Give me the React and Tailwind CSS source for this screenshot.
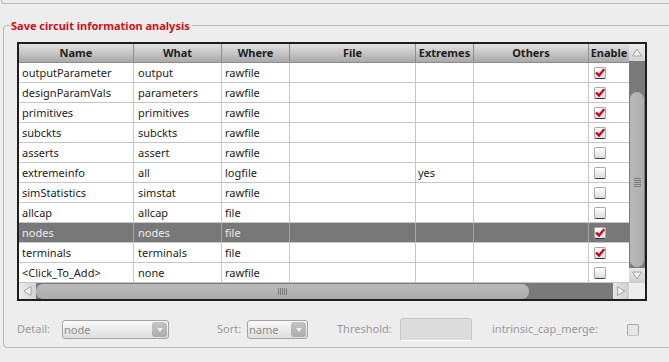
import React from 'react';

const rows = [
  { name: 'outputParameter', what: 'output', where: 'rawfile', ext: '', on: true },
  { name: 'designParamVals', what: 'parameters', where: 'rawfile', ext: '', on: true },
  { name: 'primitives', what: 'primitives', where: 'rawfile', ext: '', on: true },
  { name: 'subckts', what: 'subckts', where: 'rawfile', ext: '', on: true },
  { name: 'asserts', what: 'assert', where: 'rawfile', ext: '', on: false },
  { name: 'extremeinfo', what: 'all', where: 'logfile', ext: 'yes', on: false },
  { name: 'simStatistics', what: 'simstat', where: 'rawfile', ext: '', on: false },
  { name: 'allcap', what: 'allcap', where: 'file', ext: '', on: false },
  { name: 'nodes', what: 'nodes', where: 'file', ext: '', on: true, sel: true },
  { name: 'terminals', what: 'terminals', where: 'file', ext: '', on: true },
  { name: '<Click_To_Add>', what: 'none', where: 'rawfile', ext: '', on: false },
];

// column widths include the 1px right grid line
const cols = [
  { key: 'name', label: 'Name', w: 'w-[115px]', pad: 'pl-[3px]' },
  { key: 'what', label: 'What', w: 'w-[88px]', pad: 'pl-[4px]' },
  { key: 'where', label: 'Where', w: 'w-[68px]', pad: 'pl-[3px]' },
  { key: 'file', label: 'File', w: 'w-[126px]', pad: 'pl-[3px]' },
  { key: 'ext', label: 'Extremes', w: 'w-[58px]', pad: 'pl-[2px]' },
  { key: 'others', label: 'Others', w: 'w-[115px]', pad: 'pl-[3px]' },
];

const CheckBox = ({ checked, disabled }) => (
  <div
    className={`w-[12px] h-[12px] rounded-[2px] border border-[#a8a8a8] border-b-[#3c3c3c] flex items-center justify-center ${
      disabled ? 'bg-[#e6e6e6] border-b-[#c4c4c4]' : 'bg-gradient-to-b from-white to-[#dcdcdc]'
    }`}
  >
    {checked && (
      <svg width="10" height="9" viewBox="0 0 10 9">
        <path d="M1 4.5 L4 7.5 L9.2 1.2" fill="none" stroke="#d2001a" strokeWidth="2.4" strokeLinejoin="miter" />
      </svg>
    )}
  </div>
);

const Arrow = ({ dir }) => {
  const pts = {
    up: '1.5,9 6,2 10.5,9',
    down: '1.5,2 6,9 10.5,2',
    left: '9,1.5 2,6 9,10.5',
    right: '2.5,1.5 9.5,6 2.5,10.5',
  }[dir];
  return (
    <svg width="12" height="12" viewBox="0 0 12 12">
      <polygon points={pts} fill="#f2f2f2" stroke="#a4a4a4" strokeWidth="1" />
    </svg>
  );
};

const Combo = ({ value, w }) => (
  <div className={`${w} h-[19px] rounded-[3px] border border-[#a4a4a4] bg-gradient-to-b from-[#fafafa] to-[#dedede] flex items-center justify-between pl-[1px] pr-[1px]`}>
    <span className="text-[#8c8c8c] leading-none">{value}</span>
    <div className="w-[15px] h-[15px] rounded-[3px] bg-gradient-to-b from-[#c4c4c4] to-[#acacac] flex items-center justify-center">
      <svg width="6" height="4" viewBox="0 0 6 4">
        <polygon points="0,0 6,0 3,4" fill="#f0f0f0" />
      </svg>
    </div>
  </div>
);

export default function App() {
  return (
    <div className="w-[669px] h-[362px] overflow-hidden bg-[#ededed] font-['Noto_Sans','DejaVu_Sans',sans-serif] text-[11px] text-[#1c1c1c]">
      {/* end of the previous group box */}
      <div className="h-[4px] w-[700px] ml-[1px] border-l border-b border-[#bcbcbc] rounded-bl-[3px]" />

      <fieldset className="mt-[14px] ml-[3px] w-[700px] border border-[#b9b9b9] rounded-[4px] pb-[6px]">
        <legend className="ml-[7px] pr-[2px] leading-[15px] font-bold text-[#cc1020]">Save circuit information analysis</legend>

        <div className="mt-[9px] ml-[13px] w-[630px] border-2 border-[#1e1e1e] bg-white">
          <div className="flex">
            <div className="w-[610px]">
              {/* header */}
              <div className="flex h-[19px] bg-gradient-to-b from-[#e2e2e2] to-[#a9a9a9] border-b border-[#8c8c8c]">
                {cols.map((c) => (
                  <div key={c.key} className={`${c.w} border-r border-[#8e8e8e] flex items-center justify-center font-bold text-[#1e1e1e]`}>
                    {c.label}
                  </div>
                ))}
                <div className="w-[40px] flex items-center justify-center font-bold text-[#1e1e1e] overflow-hidden whitespace-nowrap">Enable</div>
              </div>
              {/* rows */}
              {rows.map((r, i) => (
                <div
                  key={i}
                  className={`flex h-[20px] border-b border-[#c6c6c6] ${r.sel ? 'bg-[#787878] text-[#ececec]' : 'bg-white'}`}
                >
                  {cols.map((c) => (
                    <div
                      key={c.key}
                      className={`${c.w} ${c.pad} border-r ${r.sel ? 'border-[#a6a6a6]' : 'border-[#c6c6c6]'} leading-[19px] whitespace-nowrap overflow-hidden`}
                    >
                      {c.key === 'others' || c.key === 'file' ? '' : r[c.key]}
                    </div>
                  ))}
                  <div className="w-[40px] pl-[5px] flex items-center">
                    <CheckBox checked={r.on} />
                  </div>
                </div>
              ))}
            </div>

            {/* vertical scrollbar */}
            <div className="w-[16px] h-[239px] bg-[#7a7a7a] flex flex-col">
              <div className="h-[17px] bg-gradient-to-b from-[#ececec] to-[#d2d2d2] flex items-center justify-center">
                <Arrow dir="up" />
              </div>
              <div className="h-[31px]" />
              <div className="h-[175px] mx-[1px] rounded-[7px] bg-gradient-to-r from-[#b8b8b8] to-[#aeaeae] flex items-center justify-center">
                <div className="flex flex-col gap-[1px] pt-[6px]">
                  <div className="w-[7px] h-[1px] bg-[#7c7c7c]" />
                  <div className="w-[7px] h-[1px] bg-[#7c7c7c]" />
                  <div className="w-[7px] h-[1px] bg-[#7c7c7c]" />
                  <div className="w-[7px] h-[1px] bg-[#7c7c7c]" />
                  <div className="w-[7px] h-[1px] bg-[#7c7c7c]" />
                </div>
              </div>
              <div className="flex-1" />
              <div className="h-[15px] bg-gradient-to-b from-[#e6e6e6] to-[#cecece] flex items-center justify-center">
                <Arrow dir="down" />
              </div>
            </div>
          </div>

          {/* horizontal scrollbar */}
          <div className="flex h-[16px]">
            <div className="w-[610px] bg-[#7a7a7a] flex items-center">
              <div className="w-[17px] h-[16px] bg-gradient-to-r from-[#ececec] to-[#d2d2d2] flex items-center justify-center">
                <Arrow dir="left" />
              </div>
              <div className="w-[493px] h-[15px] rounded-[7px] bg-gradient-to-b from-[#bababa] to-[#acacac] flex items-center justify-center">
                <div className="flex gap-[1px]">
                  <div className="w-[1px] h-[7px] bg-[#7c7c7c]" />
                  <div className="w-[1px] h-[7px] bg-[#7c7c7c]" />
                  <div className="w-[1px] h-[7px] bg-[#7c7c7c]" />
                  <div className="w-[1px] h-[7px] bg-[#7c7c7c]" />
                  <div className="w-[1px] h-[7px] bg-[#7c7c7c]" />
                </div>
              </div>
              <div className="flex-1" />
              <div className="w-[16px] h-[16px] bg-gradient-to-r from-[#e6e6e6] to-[#cecece] flex items-center justify-center">
                <Arrow dir="right" />
              </div>
            </div>
            <div className="w-[16px] bg-[#ededed]" />
          </div>
        </div>

        {/* options row */}
        <div className="mt-[17px] ml-[13px] h-[23px] flex items-center text-[#9a9a9a]">
          <span className="w-[45px]">Detail:</span>
          <Combo value="node" w="w-[107px]" />
          <span className="ml-[48px] w-[30px]">Sort:</span>
          <Combo value="name" w="w-[61px]" />
          <span className="ml-[29px] w-[63px]">Threshold:</span>
          <div className="w-[72px] h-[23px] rounded-[3px] border border-[#c6c6c6] border-b-white bg-[#dcdcdc]" />
          <span className="ml-[20px] w-[135px]">intrinsic_cap_merge:</span>
          <CheckBox disabled />
        </div>
      </fieldset>
    </div>
  );
}
